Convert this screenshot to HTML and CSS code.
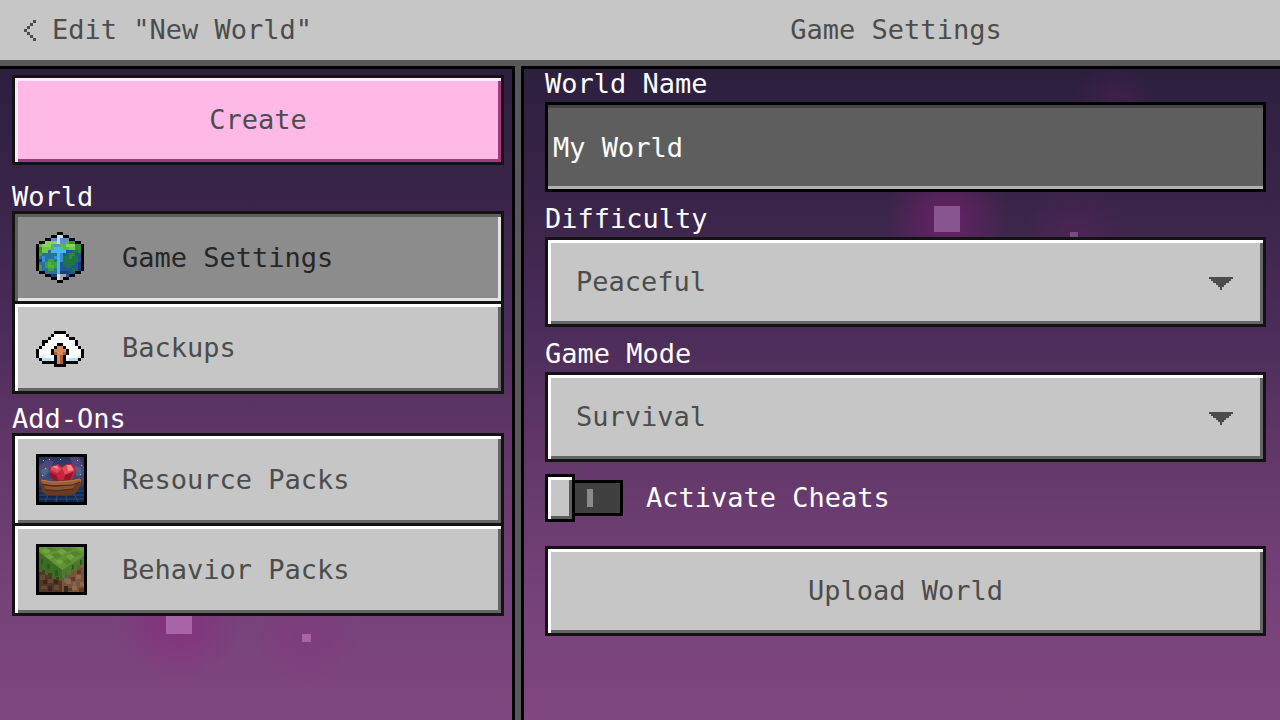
FILE: index.html
```html
<!DOCTYPE html>
<html lang="en">
<head>
    <title>Edit "New World"</title>
    <meta charset="UTF-8">
    <meta name="viewport" content="width=device-width, initial-scale=1.0">
    <link rel="stylesheet" href="styles.css">
</head>
<body>
    <header class="header">
        <a class="back" href="#">
            <svg class="back-icon" viewBox="0 0 4 7" aria-hidden="true"><path d="M3 0h1v1h-1zM2 1h1v1h-1zM1 2h1v1h-1zM0 3h1v1h-1zM1 4h1v1h-1zM2 5h1v1h-1zM3 6h1v1h-1z"/></svg>
            <span>Edit "New World"</span>
        </a>
        <h1 class="title">Game Settings</h1>
    </header>

    <div class="screen">
        <!-- floating particles -->
        <div class="particle particle-1"></div>
        <div class="particle particle-2"></div>
        <div class="particle particle-3"></div>
        <div class="particle particle-4"></div>
        <div class="glow"></div>

        <nav class="sidebar">
            <button class="btn btn-create" type="button">Create</button>

            <h2 class="side-label">World</h2>
            <div class="menu">
                <button class="btn menu-item active" type="button">
                    <svg class="icon" viewBox="0 0 17 17" shape-rendering="crispEdges" aria-hidden="true">
                        <path fill="#286fa6" d="M1 4h7v12h-1v-1h-2v-1h-2v-1h-2z"/>
                        <path fill="#20549b" d="M8 4h7v9h-2v1h-2v1h-2v1h-1z"/>
                        <path fill="#5cb83f" d="M7 1h2v1h2v1h2v1h2v1h-2v1h-3v1h-4v-1h-3v-1h-2v-1h2v-1h2v-1h2z"/>
                        <path fill="#84d460" d="M3 3h4v1h-2v1h-3v-1h1zM10 4h3v1h-3z"/>
                        <path fill="#5a8fd6" d="M7 1h2v1h2v1h-1v1h-2v1h-2v-1h1v-1h-2v-1h2z"/>
                        <path fill="#c5dde6" d="M7 1h2v1h-1v2h-1z"/>
                        <path fill="#2d9436" d="M11 3h2v1h-2zM13 4h2v2h-2zM1 5h1v2h-1z"/>
                        <path fill="#73c455" d="M2 5h3v1h-1v1h-2zM11 5h2v1h-2z"/>
                        <path fill="#46b9ea" d="M6 5h3v1h1v1h-2v8h-1v-8h-2v-1h1z"/>
                        <path fill="#39a23f" d="M4 9h2v1h1v2h-1v1h-2v-1h-1v-2h1zM1 11h1v2h-1zM1 7h1v1h-1z"/>
                        <path fill="#4cb43e" d="M4 10h1v2h-1zM5 11h1v1h-1z"/>
                        <path fill="#1d7548" d="M9 8h1v-1h2v-1h2v1h-1v1h1v2h-1v1h-1v1h-2v-1h-1zM12 12h1v1h-1z"/>
                        <path fill="#2e8a38" d="M11 7h2v1h-1v1h-1zM14 6h1v1h-1z"/>
                        <path fill="#173f7b" d="M14 10h1v3h-1zM8 13h3v1h-3zM1 9h1v1h-1zM5 14h2v1h-2z"/>
                        <path fill="#3590cb" d="M8 7h1v3h-1zM6 8h1v1h-1zM2 8h1v2h-1z"/>
                        <path fill="#dde0e0" d="M7 14h1v2h-1z"/>
                        <path fill="#a9a39f" d="M8 14h2v1h-1v1h-1z"/>
                        <path d="M7 0h2v1h-2zM5 1h2v1h-2zM9 1h2v1h-2zM3 2h2v1h-2zM11 2h2v1h-2zM1 3h2v1h-2zM13 3h2v1h-2zM0 4h1v9h-1zM15 4h1v9h-1zM1 13h2v1h-2zM13 13h2v1h-2zM3 14h2v1h-2zM11 14h2v1h-2zM5 15h2v1h-2zM9 15h2v1h-2zM7 16h2v1h-2z"/>
                    </svg>
                    <span>Game Settings</span>
                </button>
                <button class="btn menu-item" type="button">
                    <svg class="icon" viewBox="0 0 17 17" shape-rendering="crispEdges" aria-hidden="true">
                        <path fill="#fff" d="M6 4h4v1h1v1h2v2h1v1h1v3h-1v1h-12v-1h-1v-4h1v-1h2v-1h1v-1h1z"/>
                        <path fill="#dcf3fb" d="M1 11h2v1h11v-1h1v1h-1v1h-12v-1h-1zM12 7h1v1h-1zM5 7h1v1h-1z"/>
                        <path fill="#b3dff1" d="M2 12h3v1h-3zM11 12h3v1h-3z"/>
                        <path fill="#d98754" d="M7 8h2v1h1v2h-1v4h-2v-4h-1v-2h1z"/>
                        <path fill="#a85d38" d="M8 11h1v4h-1zM6 10h1v1h-1zM9 10h1v1h-1z"/>
                        <path d="M6 3h4v1h-4zM5 4h1v1h-1zM10 4h1v1h-1zM4 5h1v1h-1zM11 5h2v1h-2zM2 6h2v1h-2zM13 6h1v2h-1zM2 7h1v1h-1zM1 8h1v1h-1zM14 8h1v1h-1zM0 9h1v3h-1zM15 9h1v3h-1zM1 12h1v1h-1zM14 12h1v1h-1zM2 13h4v1h-4zM10 13h4v1h-4z"/>
                        <path d="M7 7h2v1h-2zM6 8h1v1h-1zM9 8h1v1h-1zM5 9h1v2h-1zM10 9h1v2h-1zM6 11h1v4h-1zM9 11h1v4h-1zM7 14h2v1h-2z"/>
                    </svg>
                    <span>Backups</span>
                </button>
            </div>

            <h2 class="side-label side-label-tight">Add-Ons</h2>
            <div class="menu">
                <button class="btn menu-item" type="button">
                    <svg class="icon" viewBox="0 0 51 51" aria-hidden="true">
                        <defs>
                            <linearGradient id="night" x1="0" y1="0" x2="0" y2="1">
                                <stop offset="0" stop-color="#29335c"/>
                                <stop offset=".5" stop-color="#424a78"/>
                                <stop offset=".75" stop-color="#182d55"/>
                                <stop offset="1" stop-color="#102342"/>
                            </linearGradient>
                        </defs>
                        <path d="M0 0h51v51h-51z"/>
                        <path fill="url(#night)" d="M3 3h45v45h-45z"/>
                        <path fill="#584d82" d="M3 12l9-7 6 3-5 8-10 8zM34 3h9l5 10v9l-11-8z" opacity=".7"/>
                        <path fill="#5f86a5" d="M5 16l6-3 2 5-6 6zM39 12l6 2v8h-5z" opacity=".45"/>
                        <path fill="#a7b8df" d="M7 6h1v1h-1zM13 5h1v1h-1zM24 5h1v1h-1zM41 6h1v1h-1zM45 11h1v1h-1zM9 14h1v1h-1zM44 20h1v1h-1zM6 21h1v1h-1z"/>
                        <path stroke="#244f86" d="M3 41h45M9 48l5-11M20 48l2-11M31 48l-2-11M42 48l-5-11M3 45h45M3 37h45"/>
                        <path fill="#c5243c" d="M13 16l3-4 6-2 4 3 5-3h4l4 3v7l-4 7h-15l-7-6z"/>
                        <path fill="#e04a5c" d="M15 13l6-2 5 4-5 4-6-3zM26 14l4-3 6 1 2 5-9 4z"/>
                        <path fill="#f4898e" d="M31 11h4l3 5-6 1zM17 12h4l2 3-5-1z"/>
                        <path fill="#971328" d="M14 18l6 3 3 6h-4l-6-6zM29 21l8-3-3 9h-6z"/>
                        <path fill="#693b23" d="M4 25l8 2 22-1 12-2v6l-6 9-5 2h-24l-5-3z"/>
                        <path fill="#9a5f36" d="M5 26l15 2 25-3v3l-8 3h-22l-9-1z"/>
                        <path fill="#8a5230" d="M8 32l13 1 18-2-3 4-14 1-12-1z"/>
                        <path stroke="#4a2a19" d="M6 30l10 2 20-1 8-3M9 36l10 1 18-2" fill="none"/>
                        <path stroke="#b97b48" d="M5 26l12 2 18-1 9-2" fill="none"/>
                    </svg>
                    <span>Resource Packs</span>
                </button>
                <button class="btn menu-item" type="button">
                    <svg class="icon" viewBox="0 0 51 51" aria-hidden="true">
                        <path d="M0 0h51v51h-51z"/>
                        <path fill="#609334" d="M3 3h45v12l-22 12-23-15z"/>
                        <path fill="#53832e" d="M10 4l6-1 5 3-6 2zM26 4h8l3 2-6 2zM15 11l6-2 5 3-6 3zM34 9l6-2 5 3-6 3zM26 17l6-2 4 3-5 3zM3 9l5 2-4 2z"/>
                        <path fill="#70a53d" d="M5 6l5-2 5 3-5 3zM21 7l5-2 5 3-5 3zM39 4l6-1 3 2v3zM19 17l5-2 4 3-4 3zM9 12l5-2 4 3-4 2zM30 12l5-2 4 3-5 3z"/>
                        <path fill="#503827" d="M3 12l23 15v21h-23z"/>
                        <path fill="#795439" d="M48 15l-22 12v21h22z"/>
                        <path fill="#3d6a25" d="M3 8l23 18v11h-3v-4h-3v2h-4v-6h-4v2h-3v-5h-3v2h-3z"/>
                        <path fill="#4b7c2c" d="M26 26l22-14v12h-3v-3h-4v6h-3v-3h-3v7h-4v-3h-2v6h-3z"/>
                        <path fill="#2f551f" d="M5 15h2v5h-2zM11 20h3v5h-3zM19 26h3v6h-3zM44 16h2v5h-2zM36 21h2v4h-2z"/>
                        <path fill="#694832" d="M4 31h5v5h-5zM12 35h5v4h-5zM18 41h5v5h-5zM5 42h6v3h-6z"/>
                        <path fill="#38271e" d="M7 36h4v4h-4zM18 36h4v4h-4zM12 42h4v5h-4zM28 42h4v6h-4z"/>
                        <path fill="#936748" d="M30 35h5v5h-5zM40 31h5v4h-5zM36 42h5v4h-5zM44 38h4v4h-4z"/>
                        <path fill="#706b70" d="M28 34h4v4h-4zM37 38h3v4h-3z"/>
                        <path fill="#5b3d2b" d="M41 26h4v4h-4zM35 33h4v4h-4zM43 44h5v4h-5zM32 44h4v3h-4z"/>
                    </svg>
                    <span>Behavior Packs</span>
                </button>
            </div>
        </nav>

        <div class="divider"></div>

        <form class="settings">
            <label class="label" for="worldName">World Name</label>
            <input class="text-box" type="text" id="worldName" value="My World">

            <label class="label" for="difficulty">Difficulty</label>
            <div class="dropdown">
                <select class="btn select" id="difficulty">
                    <option>Peaceful</option>
                    <option>Easy</option>
                    <option>Normal</option>
                    <option>Hard</option>
                </select>
                <svg class="caret" viewBox="0 0 24 13" shape-rendering="crispEdges" aria-hidden="true"><path d="M0 0h24v2h-2v2h-2v2h-3v2h-2v2h-2v3h-2v-3h-2v-2h-2v-2h-3v-2h-2v-2h-2v-2z"/></svg>
            </div>

            <label class="label" for="gameMode">Game Mode</label>
            <div class="dropdown">
                <select class="btn select" id="gameMode">
                    <option>Survival</option>
                    <option>Creative</option>
                    <option>Adventure</option>
                </select>
                <svg class="caret" viewBox="0 0 24 13" shape-rendering="crispEdges" aria-hidden="true"><path d="M0 0h24v2h-2v2h-2v2h-3v2h-2v2h-2v3h-2v-3h-2v-2h-2v-2h-3v-2h-2v-2h-2v-2z"/></svg>
            </div>

            <div class="toggle-row">
                <input class="toggle" type="checkbox" id="cheats">
                <label for="cheats">Activate Cheats</label>
            </div>

            <button class="btn" type="button">Upload World</button>
        </form>
    </div>
</body>
</html>
```

FILE: styles.css
```css
*, *::before, *::after { margin: 0; padding: 0; box-sizing: border-box; }
body { min-height: 100vh; display: flex; flex-direction: column; font-family: 'DejaVu Sans Mono', 'Liberation Mono', monospace; font-size: 27px; line-height: 30px; color: #fff; background: #58585a; }
button, input, select { font: inherit; border-radius: 0; }
h1, h2 { font-size: 27px; font-weight: normal; }

/* top bar */
.header { display: grid; grid-template-columns: 40% 1fr; align-items: center; height: 66px; background: #c6c6c6; border-bottom: 6px solid #58585a; color: #4c4c4c; }
.back { display: flex; align-items: center; gap: 16px; padding-left: 24px; color: inherit; text-decoration: none; white-space: nowrap; }
.back-icon { width: 12px; height: 21px; fill: #4c4c4c; shape-rendering: crispEdges; }
.title { text-align: center; }

.screen { flex: 1; position: relative; display: grid; grid-template-columns: 40% 12px 1fr; overflow: hidden; background: linear-gradient(#2c1f3e 0%, #3b254a 22%, #4b2c59 40%, #633869 60%, #76427a 82%, #80467f 100%); }
.sidebar { position: relative; padding: 6px 8px 24px 12px; border-top: 3px solid #000; }
.divider { position: relative; background: #58585a; border-left: 3px solid #000; border-right: 3px solid #000; }
.settings { position: relative; display: flex; flex-direction: column; padding: 0 14px 24px 21px; border-top: 3px solid #000; }

/* buttons */
.btn { display: block; width: 100%; height: 90px; border: 3px solid #131313; background: #c6c6c6; color: #4c4c4c; box-shadow: inset 3px 3px #fff, inset -3px -3px #656565; cursor: pointer; }
.btn-create { background: #ffb9e6; box-shadow: inset 3px 3px #ffe8f7, inset -3px -3px #a33a80; }
.menu-item { display: flex; align-items: center; gap: 35px; height: 93px; padding: 0 21px; text-align: left; }
.menu-item + .menu-item { margin-top: -3px; }
.menu-item.active { background: #8c8c8c; color: #262626; box-shadow: inset 3px 3px #5e5e5e, inset -3px -3px #e4e4e4; }
.icon { width: 51px; height: 51px; flex: none; }

.side-label { margin-top: 18px; line-height: 28px; }
.side-label-tight { margin-top: 11px; }

/* form */
.label { padding-bottom: 3px; }
.text-box { width: 100%; height: 90px; margin-bottom: 12px; padding: 0 5px; border: 3px solid #000; background: #5e5e5e; color: #fff; box-shadow: inset 0 3px #444, inset 0 -3px #b1b1b1; outline: none; }
.dropdown { position: relative; margin-bottom: 12px; }
.select { appearance: none; padding: 0 66px 0 28px; outline: none; }
.caret { position: absolute; right: 33px; top: 40px; width: 24px; height: 13px; fill: #4c4c4c; pointer-events: none; }

.toggle-row { display: flex; align-items: center; gap: 23px; height: 48px; margin-bottom: 24px; }
.toggle { appearance: none; position: relative; width: 78px; height: 36px; border: 3px solid #000; background: #404040; cursor: pointer; }
.toggle::before { content: ""; position: absolute; left: -3px; top: -9px; width: 30px; height: 48px; border: 3px solid #000; background: #c6c6c6; box-shadow: inset 3px 3px #fff, inset -3px -3px #5c5c5c; }
.toggle::after { content: ""; position: absolute; left: 39px; top: 6px; width: 6px; height: 18px; background: #8a8a8a; }
.toggle:checked::before { left: 45px; }
.toggle:checked::after { left: 15px; }

/* particles */
.particle { position: absolute; width: 26px; height: 26px; isolation: isolate; }
.particle::before { content: ""; position: absolute; inset: -48px; background: radial-gradient(closest-side, rgba(150, 30, 130, .5), rgba(150, 30, 130, 0)); }
.particle::after { content: ""; position: absolute; inset: 0; background: #87558f; }
.particle-1 { left: 73%; top: 140px; }
.particle-2 { left: 83.6%; top: 166px; width: 8px; height: 8px; opacity: .8; }
.particle-3 { left: 13%; top: 542px; }
.particle-4 { left: 23.6%; top: 568px; width: 9px; height: 8px; }
.particle-3::after, .particle-4::after { background: #a964a8; }
.particle-2::before, .particle-4::before { opacity: .4; }
.glow { position: absolute; left: 84%; top: 0; width: 80px; height: 60px; background: radial-gradient(closest-side, rgba(150, 30, 130, .15), rgba(150, 30, 130, 0)); }
```
